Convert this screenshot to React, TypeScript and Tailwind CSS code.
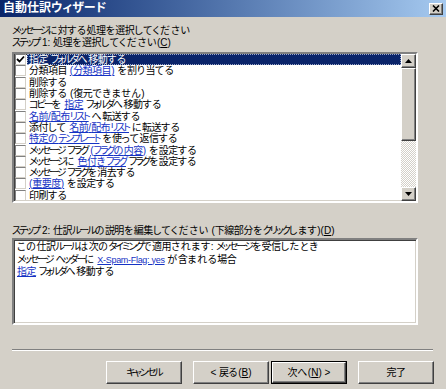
import React from "react";

type Seg = string | { l: string };

const items: Seg[][] = [
  [{ l: "指定" }, " フォルダへ移動する"],
  ["分類項目 ", { l: "(分類項目)" }, " を割り当てる"],
  ["削除する"],
  ["削除する (復元できません)"],
  ["コピーを ", { l: "指定" }, " フォルダへ移動する"],
  [{ l: "名前/配布リスト" }, " へ転送する"],
  ["添付して ", { l: "名前/配布リスト" }, " に転送する"],
  [{ l: "特定のテンプレート" }, " を使って返信する"],
  ["メッセージ フラグ ", { l: "(フラグの内容)" }, " を設定する"],
  ["メッセージに ", { l: "色付きフラグ" }, " フラグを設定する"],
  ["メッセージ フラグを消去する"],
  [{ l: "(重要度)" }, " を設定する"],
  ["印刷する"],
];

// Approximates the proportional widths of the original UI font per script.
function jp(text: string): React.ReactNode[] {
  const re = /([\u4E00-\u9FFF\u3005]+)|([\u3040-\u309F]+)|([\u30A0-\u30FF]+)|([^\u3040-\u30FF\u4E00-\u9FFF\u3005]+)/g;
  const out: React.ReactNode[] = [];
  let m: RegExpExecArray | null;
  let k = 0;
  while ((m = re.exec(text)) !== null) {
    if (m[1]) out.push(<span key={k++} className="tracking-[-0.5px]">{m[1]}</span>);
    else if (m[2]) out.push(<span key={k++} className="tracking-[0.6px]">{m[2]}</span>);
    else if (m[3]) out.push(<span key={k++} className="tracking-[-2px]">{m[3]}</span>);
    else out.push(<React.Fragment key={k++}>{m[4]}</React.Fragment>);
  }
  return out;
}

function Segs({ segs, selected }: { segs: Seg[]; selected?: boolean }) {
  return (
    <span className="whitespace-pre">
      {segs.map((s, i) =>
        typeof s === "string" ? (
          <React.Fragment key={i}>{jp(s)}</React.Fragment>
        ) : (
          <span key={i} className={selected ? "underline text-white" : "underline text-[#1533c4]"}>
            {jp(s.l)}
          </span>
        )
      )}
    </span>
  );
}

function Check({ checked }: { checked?: boolean }) {
  return (
    <div className="w-[11px] h-[11px] shrink-0 bg-white border border-t-[#808080] border-l-[#808080] border-b-[#d4d0c8] border-r-[#d4d0c8] flex items-center justify-center">
      {checked && (
        <svg width="9" height="9" viewBox="0 0 9 9">
          <path d="M1 4 L3.5 6.5 L8 1.5" stroke="#000" strokeWidth="1.8" fill="none" />
        </svg>
      )}
    </div>
  );
}

function Arrow({ down }: { down?: boolean }) {
  return (
    <svg width="7" height="4" viewBox="0 0 7 4">
      {down ? <polygon points="0,0 7,0 3.5,4" fill="#000" /> : <polygon points="0,4 7,4 3.5,0" fill="#000" />}
    </svg>
  );
}

const raised =
  "bg-[#d4d0c8] border border-t-white border-l-white border-b-[#404040] border-r-[#404040] shadow-[inset_-1px_-1px_0_#808080]";

const sunken =
  "bg-white border-2 border-t-[#808080] border-l-[#808080] border-b-white border-r-white shadow-[inset_1px_1px_0_#404040,inset_-1px_-1px_0_#d4d0c8]";

function Btn({ children, def }: { children: React.ReactNode; def?: boolean }) {
  const inner = (
    <div className={`${raised} w-full h-full flex items-center justify-center whitespace-pre`}>{children}</div>
  );
  return def ? (
    <div className="w-[76px] h-[23px] border border-black">{inner}</div>
  ) : (
    <div className="w-[76px] h-[23px]">{inner}</div>
  );
}

export default function App() {
  return (
    <div
      className="w-[446px] h-[389px] bg-[#d4d0c8] text-black text-[10px] overflow-hidden flex flex-col [font-feature-settings:'palt']"
      style={{ fontFamily: '"Liberation Sans", "Noto Sans CJK JP", sans-serif' }}
    >
      <div className="h-[17px] shrink-0 bg-gradient-to-r from-[#0a246a] to-[#a6caf0] flex items-center justify-between pl-[3px] pr-[3px]">
        <span className="text-white font-bold text-[12px] leading-[17px] whitespace-nowrap">自動仕訳ウィザード</span>
        <div className={`${raised} w-[14px] h-[12px] flex items-center justify-center`}>
          <svg width="8" height="7" viewBox="0 0 8 7">
            <path d="M1 0.5 L7 6.5 M7 0.5 L1 6.5" stroke="#000" strokeWidth="1.6" />
          </svg>
        </div>
      </div>

      <div className="flex flex-col px-[12px] pt-[8px]">
        <div className="leading-[12px] whitespace-pre">{jp("メッセージに対する処理を選択してください")}</div>
        <div className="leading-[12px] whitespace-pre">
          {jp("ステップ 1: 処理を選択してください(")}
          <span className="underline">C</span>)
        </div>

        <div className={`${sunken} mt-[3px] w-[406px] h-[151px] flex`}>
          <div className="flex-1 flex flex-col pl-[1px] overflow-hidden">
            {items.map((segs, i) => {
              const sel = i === 0;
              return (
                <div key={i} className="flex items-center h-[11.3px] shrink-0">
                  <Check checked={sel} />
                  <div
                    className={
                      sel
                        ? "ml-[1px] flex-1 h-full flex items-center pl-[1px] bg-[#0a246a] text-white border border-dotted border-[#9aa6c8] leading-[10px]"
                        : "ml-[1px] flex-1 h-full flex items-center pl-[2px] leading-[11px]"
                    }
                  >
                    <Segs segs={segs} selected={sel} />
                  </div>
                </div>
              );
            })}
          </div>
          <div className="w-[15px] shrink-0 flex flex-col">
            <div className={`${raised} h-[14px] shrink-0 flex items-center justify-center`}>
              <Arrow />
            </div>
            <div className={`${raised} h-[73px] shrink-0`} />
            <div className="flex-1 [background-image:repeating-conic-gradient(#d4d0c8_0_25%,#ffffff_0_50%)] [background-size:2px_2px]" />
            <div className={`${raised} h-[14px] shrink-0 flex items-center justify-center`}>
              <Arrow down />
            </div>
          </div>
        </div>

        <div className="mt-[22px] leading-[12px] whitespace-pre">
          {jp("ステップ 2: 仕訳ルールの説明を編集してください (下線部分をクリックします)(")}
          <span className="underline">D</span>)
        </div>

        <div className={`${sunken} mt-[1px] w-[406px] h-[87px] flex flex-col pl-[3px] pt-[1px] leading-[12.5px] whitespace-pre`}>
          <div>{jp("この仕訳ルールは次のタイミングで適用されます: メッセージを受信したとき")}</div>
          <div>
            {jp("メッセージ ヘッダーに ")}
            <span className="underline text-[#1533c4] text-[9px] tracking-[-0.3px]">X-Spam-Flag: yes</span>
            {jp(" が含まれる場合")}
          </div>
          <div>
            <span className="underline text-[#1533c4]">{jp("指定")}</span>
            {jp(" フォルダへ移動する")}
          </div>
        </div>

        <div className="mt-[24px] h-[2px] w-[421px] border-t border-t-[#808080] border-b border-b-white" />

        <div className="mt-[10px] flex justify-end w-[422px]">
          <Btn>{jp("キャンセル")}</Btn>
          <div className="w-[11px]" />
          <Btn>
            {jp("< 戻る(")}
            <span className="underline">B</span>)
          </Btn>
          <div className="w-[2px]" />
          <Btn def>
            {jp("次へ(")}
            <span className="underline">N</span>) &gt;
          </Btn>
          <div className="w-[11px]" />
          <Btn>{jp("完了")}</Btn>
        </div>
      </div>
    </div>
  );
}
